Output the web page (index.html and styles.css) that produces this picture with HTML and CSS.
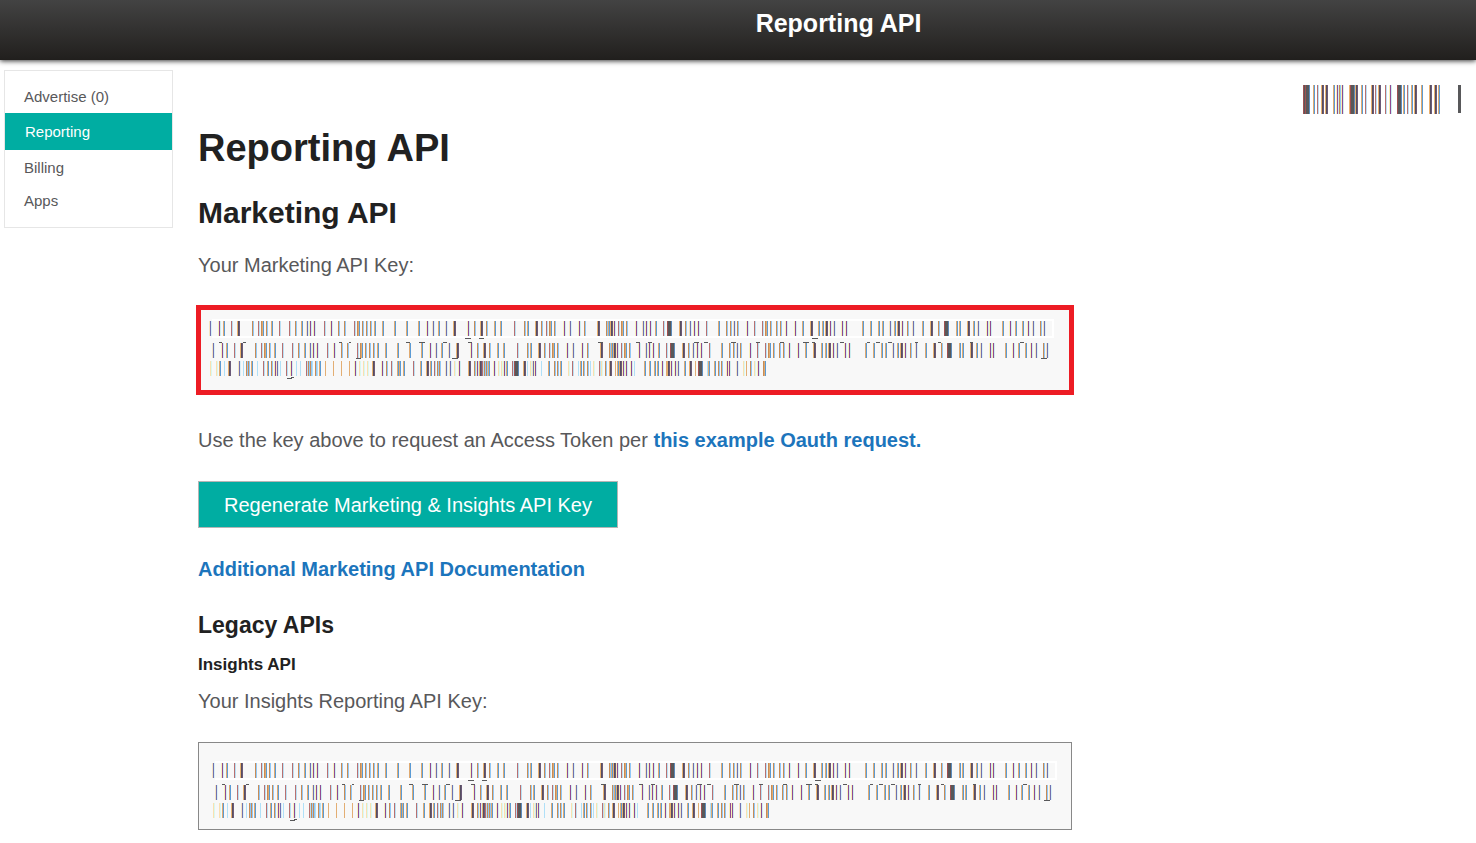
FILE: index.html
```
<!DOCTYPE html>
<html lang="en">
<head>
<meta charset="utf-8">
<title>Reporting API</title>
<link rel="stylesheet" href="styles.css">
</head>
<body>
<header class="topbar"><div class="topbar-title">Reporting API</div></header>
<div class="page">
  <nav class="sidebar">
    <a class="nav-link" href="#advertise">Advertise (0)</a>
    <a class="nav-link active" href="#reporting">Reporting</a>
    <a class="nav-link" href="#billing">Billing</a>
    <a class="nav-link" href="#apps">Apps</a>
  </nav>
  <main class="content">
    <h1>Reporting API</h1>
    <h2>Marketing API</h2>
    <p class="key-label">Your Marketing API Key:</p>
    <div class="key-box highlighted"><svg class="key-mask" width="850" height="60" aria-hidden="true"></svg></div>
    <p class="hint">Use the key above to request an Access Token per <a href="#oauth">this example Oauth request.</a></p>
    <button class="regenerate" type="button">Regenerate Marketing &amp; Insights API Key</button>
    <p class="docs"><a href="#docs">Additional Marketing API Documentation</a></p>
    <h3>Legacy APIs</h3>
    <h4>Insights API</h4>
    <p class="insights-label">Your Insights Reporting API Key:</p>
    <div class="key-box bordered"><svg class="key-mask" width="850" height="60" aria-hidden="true"></svg></div>
  </main>
  <aside class="account"><svg class="account-mask" width="160" height="29" aria-hidden="true"></svg></aside>
</div>
<script src="mask.js"></script>
</body>
</html>
```
FILE: styles.css
```
* { box-sizing: border-box; }
body {
  margin: 0;
  background: #fff;
  color: #58585a;
  font-family: "Liberation Sans", Arial, sans-serif;
  font-size: 20px;
  line-height: 24px;
}
.topbar {
  height: 60px;
  padding: 8px 0 0 201px;
  background: linear-gradient(#434343, #211f1d);
  box-shadow: 0 1px 5px rgba(0, 0, 0, 0.8);
  color: #fff;
  text-align: center;
}
.topbar-title { font-size: 25px; font-weight: bold; line-height: 30px; }
.page { display: flex; align-items: flex-start; padding: 10px 15px 13px 4px; }
.sidebar {
  flex: none;
  width: 169px;
  padding: 10px 0;
  border: 1px solid #e6e6e6;
  font-size: 15px;
}
.nav-link {
  display: block;
  padding-left: 19px;
  color: #58585a;
  font-weight: normal;
  line-height: 33px;
}
.nav-link:first-child { line-height: 32px; }
.nav-link.active { margin-bottom: 1px; padding-left: 20px; background: #00ada2; color: #fff; line-height: 37px; }
.content { flex: 1; min-width: 0; max-width: 899px; padding: 56px 0 0 25px; }
h1, h2, h3, h4, p { margin: 0; }
h1, h2, h3, h4 { color: #212121; }
h1 { font-size: 38px; line-height: 44px; }
h2 { margin-top: 25px; font-size: 30px; line-height: 36px; }
h3 { margin-top: 30px; font-size: 23px; line-height: 28px; }
h4 { margin-top: 14px; font-size: 17px; line-height: 24px; }
a { color: #1c75bc; font-weight: bold; text-decoration: none; }
.key-label { margin-top: 22px; }
.hint { margin-top: 35px; }
.docs { margin-top: 29px; }
.insights-label { margin-top: 12px; }
.key-box { overflow: hidden; background: #f8f8f8; }
.key-mask, .account-mask { display: block; shape-rendering: crispEdges; }
.highlighted { margin-top: 30px; padding: 12px 0 14px 11px; outline: 5px solid #ed1c24; outline-offset: -3px; }
.bordered { margin-top: 29px; padding: 18px 0 8px 13px; border: 1px solid #888; }
.regenerate {
  display: block;
  margin-top: 29px;
  padding: 1px 25px 0;
  border: 1px solid #b5b5b5;
  background: #00ada2;
  color: #fff;
  font: inherit;
  line-height: 44px;
}
.account { margin-left: auto; padding-top: 15px; }
```
FILE: mask.js
```
// Each stripe is "<kind><position>", positions in thirds of a pixel.
const KINDS = {
  s: ['#f5e2c0', '#7070b0', '#d8f0f8'],
  p: ['#f8efb8', '#8f4a94', '#cdeef0'],
  b: ['#e0aa70', '#5b9bd5'],
  t: ['', '#e3ae73'],
  o: ['', '#c88c55', '#90c8f8'],
  r: ['', '#b87070', '#b8e0f5'],
  k: ['#e8b070', '#564e60', '#6a5a78'],
  K: ['#a05050', '#58585a', '#58585a', '#58585a', '#5b8bbd'],
  c: ['', '#b0e0f8'],
  y: ['', '#fae0b0', '#d8f8f0']
};
const ROW_A = 's60 p87 b102 r123 k144 o186 r204 o213 b219 o228 b246 r267 r297 o315 b336 s351 p360 p372 r402 p423 o444 o462 r492 o501 b507 o516 o528 o540 b555 b579 b615 b651 b687 p711 s729 b747 s768 k792 p834 o852 k873 o888 ' +
  'b915 b933 r972 o1002 b1014 k1038 o1053 r1068 o1077 b1083 o1092 p1122 s1140 p1167 o1182 k1224 o1248 b1257 k1263 p1272 r1284 o1293 b1299 o1308 p1338 s1359 p1368 p1380 b1398 r1419 K1434 k1470 o1485 s1500 p1512 p1524 r1548 b1587 o1608 o1620 s1632 o1641 p1671 r1692 r1716 o1725 b1731 o1740 o1758 o1770 p1788 ' +
  'p1815 b1839 k1863 b1887 b1899 k1908 p1920 s1932 p1956 p1968 b2019 b2043 b2067 b2079 s2100 b2115 k2124 p2136 o2151 s2169 b2199 k2223 o2244 K2265 b2301 b2310 k2334 b2352 s2364 p2391 p2400 b2439 p2460 b2478 b2499 p2514 s2529 o2550 s2562';
const ROW_B = 'y60 y78 b90 c102 k117 s147 c159 o168 o174 b186 c201 r219 b234 o243 p255 s261 c270 r288 p303 c318 c330 r348 o354 o360 c366 o375 c381 b390 t405 t429 t453 t477 p495 y507 y519 y531 k549 p576 o588 r603 b624 b630 b642 r669 b693 k711 b723 r732 o741 o747 s768 s780 y792 p807 k837 o852 p861 k870 r876 o882 o888 b897 ' +
  'p912 y924 y933 p942 b951 r966 K975 k1002 c1011 y1020 s1029 p1036 c1053 b1077 o1092 o1101 b1113 y1134 r1146 c1164 b1173 o1179 o1191 c1200 y1209 r1227 y1233 o1245 k1260 t1275 b1284 k1290 p1299 p1308 p1323 c1332 b1365 b1380 b1395 b1404 p1416 b1431 k1434 p1443 p1455 s1464 b1485 k1500 t1515 K1527 c1551 b1557 b1575 o1584 o1593 p1611 p1617 s1641 y1659 t1668 o1680 y1692 p1704 o1719 b1725';
const HOOKS_TOP = [[87,9],[159,9],[447,9],[477,6],[648,12],[687,18],[759,12],[834,12],[1224,15],[1338,12],[1374,12],[1512,15],[1542,12],[1623,15],[1698,12],[1770,12],[1839,18],[1866,9],[1950,12],[2031,9],[2058,12],[2094,12],[2175,9],[2244,9],[2340,9],[2490,12]];
const EMAIL = 'K42 K48 b72 r81 k96 k108 b132 p141 o147 p156 k180 K183 k198 b216 r225 k246 r255 k267 r285 p300 k324 K324 b342 r351 b366 k375 b396 k420 k435 b447';

function rect(svg, x, y, w, h, fill) {
  const r = document.createElementNS('http://www.w3.org/2000/svg', 'rect');
  Object.entries({ x, y, width: w, height: h, fill }).forEach(([k, v]) => r.setAttribute(k, v));
  svg.append(r);
}
function stripes(svg, data, dx, y, h) {
  data.split(' ').forEach(item => {
    const x = Math.round(item.slice(1) / 3) + dx;
    KINDS[item[0]].forEach((color, i) => { if (color) rect(svg, x + i - 1, y, 1, h, color); });
  });
}
document.querySelectorAll('.key-mask').forEach(svg => {
  rect(svg, 3, 0, 842, 19, '#fff');
  rect(svg, 0, 2, 843, 15, '#f8f8f8');
  stripes(svg, ROW_A, -19, 2, 15);
  stripes(svg, ROW_A, -16, 24, 15);
  stripes(svg, ROW_B, -19, 42, 15);
  const hook = (x, w, y) => rect(svg, x / 3 - 19, y, w / 3, 1, '#58585a');
  HOOKS_TOP.forEach(([x, w]) => hook(x, w, 23));
  [[825, 18], [867, 15], [1866, 18]].forEach(([x, w]) => hook(x, w, 19));
  [[498, 15], [786, 18], [2553, 18]].forEach(([x, w]) => hook(x, w, 39));
  hook(291, 15, 59);
  hook(303, 9, 58);
});
const account = document.querySelector('.account-mask');
stripes(account, EMAIL, -11, 0, 29);
rect(account, 157, 0, 3, 28, '#58585a');
```
